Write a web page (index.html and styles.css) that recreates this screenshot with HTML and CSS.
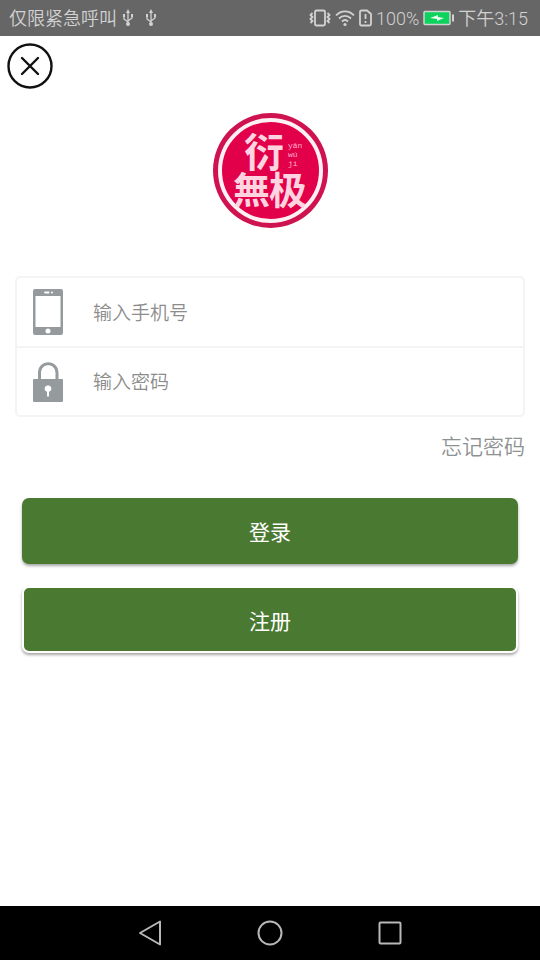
FILE: index.html
```html
<!DOCTYPE html>
<html lang="zh-CN">
<head>
	<meta charset="utf-8">
	<meta name="viewport" content="width=device-width, initial-scale=1">
	<title>登录</title>
	<link rel="stylesheet" href="styles.css">
</head>
<body>
	<header class="status-bar">
		<span>仅限紧急呼叫</span>
		<svg class="usb" width="12" height="18" viewBox="0 0 12 18">
			<path d="M6 3v12M6 13L2 10V7M6 12l4-3V6" />
			<path class="solid" d="M6 0l2 4H4zM1 5h2v3H1zM9 5h2v3H9z" />
			<circle class="solid" cx="6" cy="15" r="2" />
		</svg>
		<svg class="usb" width="12" height="18" viewBox="0 0 12 18">
			<path d="M6 3v12M6 13L2 10V7M6 12l4-3V6" />
			<path class="solid" d="M6 0l2 4H4zM1 5h2v3H1zM9 5h2v3H9z" />
			<circle class="solid" cx="6" cy="15" r="2" />
		</svg>
		<div class="status-right">
			<svg width="22" height="18" viewBox="0 0 22 18">
				<rect x="6" y="1.5" width="10" height="15" rx="1.5" stroke-width="1.8" />
				<path stroke-width="1.8" d="M3.500 4L1.500 6l2 2-2 2 2 2-2 2M18.500 4l2 2-2 2 2 2-2 2 2 2" />
			</svg>
			<svg width="20" height="18" viewBox="0 0 20 18">
				<path stroke-width="1.8" d="M1 6.500C6 1 14 1 19 6.500M4 9.500C7.500 6 12.500 6 16 9.500M7 12.500c2-2 4-2 6 0" />
				<circle class="solid" cx="10" cy="15.500" r="1.600" />
			</svg>
			<svg width="13" height="18" viewBox="0 0 13 18">
				<path stroke-width="1.8" d="M2.500 1.500H8L12 5v10q0 1.500-1.500 1.500h-8Q1 16.500 1 15V3q0-1.500 1.500-1.500zM6.500 5v5M6.500 12v2" />
			</svg>
			<span>100%</span>
			<svg class="battery" width="31" height="16" viewBox="0 0 31 16">
				<rect class="charge" x="1" y="1.500" width="26" height="13" rx="1" />
				<path class="bolt" d="M7 8l8-3v2l6 1-7 3V9z" />
				<path stroke-width="2" d="M30 4.500v7" />
			</svg>
			<span>下午3:15</span>
		</div>
	</header>

	<main class="page">
		<button class="close" type="button" aria-label="关闭">
			<svg width="46" height="46" viewBox="0 0 46 46">
				<circle cx="23" cy="23" r="21.500" />
				<path d="M15 15l16 16M31 15L15 31" />
			</svg>
		</button>

		<svg class="logo" width="116" height="116" viewBox="0 0 116 116">
			<circle class="logo-rim" cx="58.500" cy="58.500" r="57.500" />
			<circle class="logo-disc" cx="58.500" cy="58.500" r="50.500" />
			<text class="logo-char" x="32" y="55" font-size="40">衍</text>
			<text class="logo-char" x="21" y="92" font-size="37">無</text>
			<text class="logo-char" x="57" y="92" font-size="38">极</text>
			<text class="logo-pinyin" x="76" y="36">yǎn</text>
			<text class="logo-pinyin" x="76" y="45">wú</text>
			<text class="logo-pinyin" x="76" y="54">jí</text>
		</svg>

		<form class="login">
			<div class="fields">
				<div class="field">
					<label for="phone" aria-label="手机号">
						<svg width="30" height="46" viewBox="0 0 30 46">
							<path fill-rule="evenodd" d="M2 0h26q2 0 2 2v42q0 2-2 2H2q-2 0-2-2V2Q0 0 2 0zM2.500 7v31h25V7zM12 2.500q-2 1 0 2h4q1-1 0-2zM19 2.500a1 1 0 0 0 0 2 1 1 0 0 0 0-2zM15 39.500a2.500 2.500 0 0 0 0 5 2.500 2.500 0 0 0 0-5z" />
						</svg>
					</label>
					<input id="phone" type="tel" placeholder="输入手机号">
				</div>
				<div class="field">
					<label for="password" aria-label="密码">
						<svg width="30" height="40" viewBox="0 0 30 40">
							<path fill-rule="evenodd" d="M1 17h4v-6C5-3.500 25.500-3.500 25.500 11v6H29q1 0 1 1v21q0 1-1 1H1q-1 0-1-1V18q0-1 1-1zM8 17h14.500v-6C22.500 .5 8 .5 8 11zM15 23.500a3 3 0 0 0-2 5.500l1 1v4q1 1.500 2 0v-4l1-1a3 3 0 0 0-2-5.500z" />
						</svg>
					</label>
					<input id="password" type="password" placeholder="输入密码">
				</div>
			</div>
			<a class="forgot" href="#">忘记密码</a>
			<div class="actions">
				<button class="btn" type="submit">登录</button>
				<button class="btn btn-outlined" type="button">注册</button>
			</div>
		</form>
	</main>

	<nav class="nav-bar">
		<button type="button" aria-label="返回">
			<svg width="24" height="26" viewBox="0 0 24 26"><path d="M22 1.500v23L2 13z" /></svg>
		</button>
		<button type="button" aria-label="主页">
			<svg width="24" height="26" viewBox="0 0 24 26"><circle cx="12" cy="13" r="11.500" /></svg>
		</button>
		<button type="button" aria-label="最近任务">
			<svg width="24" height="26" viewBox="0 0 24 26"><rect x="1.500" y="2.500" width="21" height="21" rx="1" /></svg>
		</button>
	</nav>
</body>
</html>
```
FILE: styles.css
```css
/* general */
* {
	box-sizing: border-box;
}
body {
	display: flex;
	flex-direction: column;
	min-height: 100vh;
	margin: 0;
	background-color: #fff;
	font-family: Roboto, "Noto Sans CJK SC", sans-serif;
}
button {
	padding: 0;
	border: 0;
	background: none;
	font-family: inherit;
	cursor: pointer;
}
svg {
	display: block;
	overflow: visible;
}

/* status bar */
.status-bar {
	display: flex;
	align-items: center;
	height: 36px;
	padding: 0 12px 0 9px;
	background-color: #666;
	color: #d2d2d2;
	font-size: 18px;
	font-weight: 350;
	line-height: 36px;
	white-space: nowrap;
}
.status-bar span {
	padding-top: 2px;
}
.status-bar svg {
	fill: none;
	stroke: #d2d2d2;
	stroke-width: 1.3;
}
.status-bar .solid {
	fill: #d2d2d2;
	stroke: none;
}
.usb {
	margin-left: 5px;
}
.usb + .usb {
	margin-left: 11px;
}
.status-right {
	display: flex;
	align-items: center;
	gap: 4px;
	margin-left: auto;
}
.battery .charge {
	fill: #0bd35c;
	stroke-width: 1.5;
}
.battery .bolt {
	fill: #e8fff0;
	stroke: none;
}

/* page */
.page {
	display: flex;
	flex: 1;
	flex-direction: column;
	padding: 7px 15px;
}
.close {
	align-self: flex-start;
	margin-left: -8px;
}
.close svg {
	fill: none;
	stroke: #111;
	stroke-width: 2.4;
	stroke-linecap: round;
}
.logo {
	align-self: center;
	margin-top: 23px;
}
.logo-rim {
	fill: #cf1350;
}
.logo-disc {
	fill: #e2004b;
	stroke: #fff0f5;
	stroke-width: 4;
}
.logo-char {
	fill: #ffd3df;
	font-family: "Noto Sans CJK SC", sans-serif;
	font-weight: 700;
}
.logo-pinyin {
	fill: #ffb3c8;
	font-family: "Liberation Mono", monospace;
	font-size: 8px;
}

/* form */
.login {
	display: flex;
	flex-direction: column;
	margin-top: 48px;
}
.fields {
	border: 2px solid #f4f4f4;
	border-radius: 5px;
}
.field {
	display: flex;
	align-items: center;
	height: 68px;
	padding-left: 16px;
}
.field + .field {
	height: 69px;
	border-top: 2px solid #f4f4f4;
}
.field svg {
	fill: #959b9d;
}
.field input {
	flex: 1;
	min-width: 0;
	height: 100%;
	margin-left: 30px;
	padding: 2px 0 0;
	border: 0;
	outline: 0;
	background: none;
	font-family: inherit;
	font-size: 19px;
	font-weight: 350;
}
.field input::placeholder {
	color: #8c8c8c;
}
.forgot {
	align-self: flex-end;
	margin-top: 15px;
	color: #8e9192;
	font-size: 21px;
	font-weight: 350;
	line-height: 30px;
	text-decoration: none;
}
.actions {
	display: flex;
	flex-direction: column;
	gap: 22px;
	margin: 36px 7px 0;
}
.btn {
	height: 66px;
	border-radius: 7px;
	background-color: #4a7a31;
	box-shadow: 0 2px 3px rgba(0, 0, 0, 0.35);
	color: #fff;
	font-size: 21px;
}
.btn-outlined {
	height: 67px;
	border: 2px solid #fff;
}

/* navigation bar */
.nav-bar {
	display: flex;
	align-items: center;
	justify-content: center;
	gap: 96px;
	height: 54px;
	background-color: #000;
}
.nav-bar svg {
	fill: none;
	stroke: #b8b8b8;
	stroke-width: 2;
	stroke-linejoin: round;
}
```
